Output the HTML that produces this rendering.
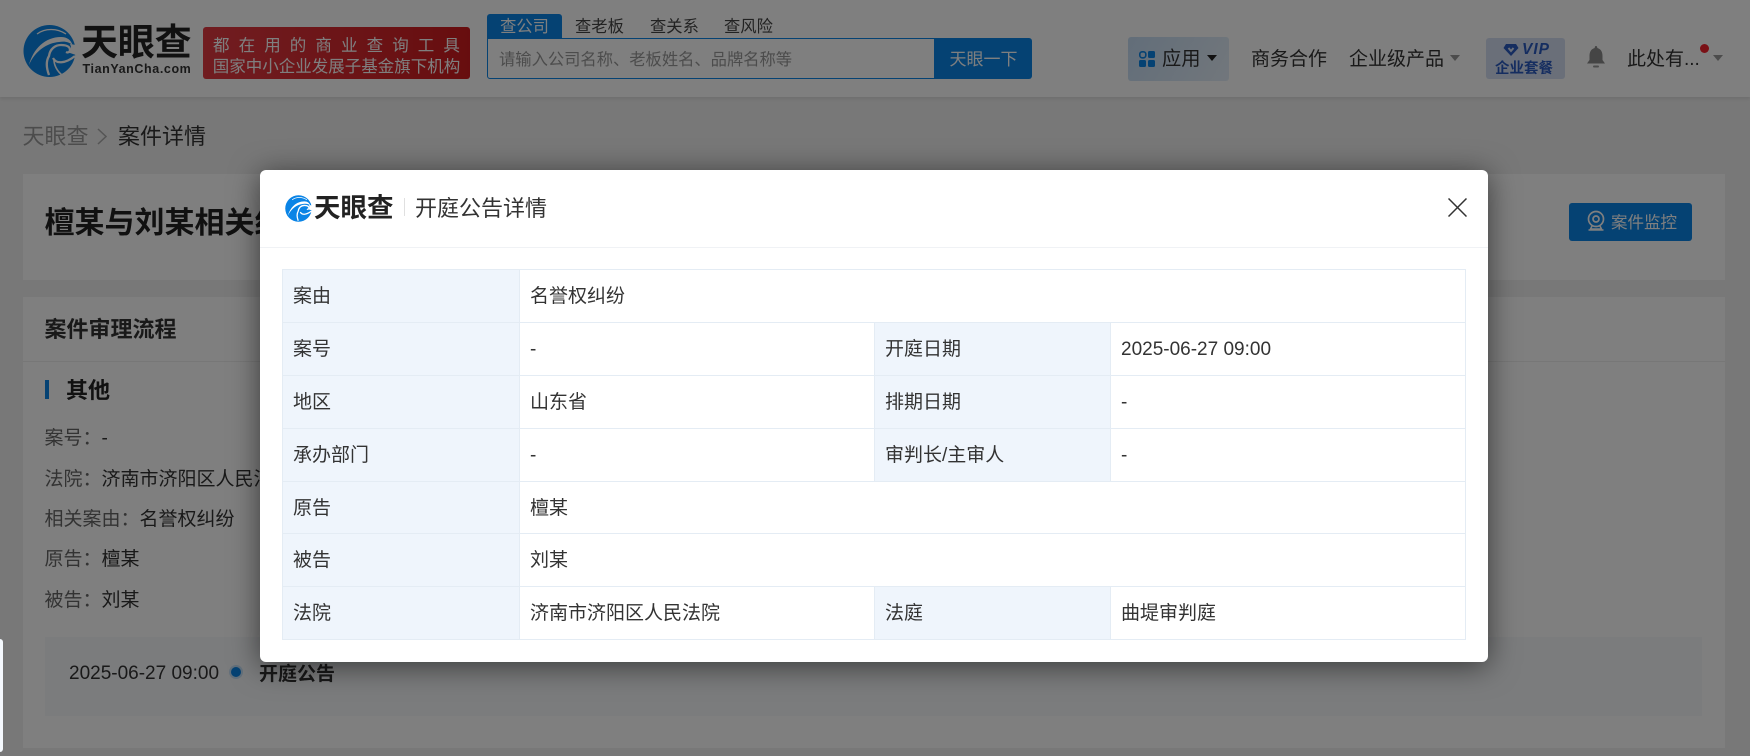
<!DOCTYPE html>
<html lang="zh"><head><meta charset="utf-8"><title>案件详情</title>
<style>
html,body{margin:0;padding:0;width:1750px;height:756px;overflow:hidden;background:#f0f0f0;font-family:"Liberation Sans","Noto Sans CJK SC",sans-serif;color:#333}
.a{position:absolute;white-space:nowrap}
.t{position:absolute;white-space:nowrap;line-height:30px;height:30px;margin-top:2px}
#header{position:absolute;left:0;top:0;width:1750px;height:97px;background:#fff;box-shadow:0 1px 4px rgba(0,0,0,.12)}
.card{position:absolute;left:22px;width:1702px;background:#fff;border:1px solid #f0f0f0}
.lab{color:#666}
.lab b{font-weight:400;color:#333}
#ov{position:absolute;left:0;top:0;width:1750px;height:756px;background:rgba(0,0,0,.5)}
#modal{position:absolute;left:260px;top:170px;width:1228px;height:492px;background:#fff;border-radius:6px;box-shadow:0 4px 30px rgba(0,0,0,.55)}
.cell{position:absolute;box-sizing:border-box;border:1px solid #e4ecf4;font-size:19px;color:#333;line-height:54px;padding-left:10px;white-space:nowrap;margin:0 -1px -1px 0}
.l{background:#eff5fc}
</style></head><body>
<div id="header">
<svg class="a" style="left:23px;top:25px" width="53" height="52" viewBox="0 0 53 52"><circle cx="26.500" cy="26" r="26" fill="#0a84e6"/><path d="M14 9C22 3 34 3 43 9" fill="none" stroke="#fff" stroke-width="1.300"/><path d="M6 40C10 24 22 12 38 12C44 12 48 15 49.500 20C46 17 42 16 36 17C24 18 12 26 6 40Z" fill="#fff"/><path d="M53 20L47 19C49 23 48 26 44 27L53 30Z" fill="#fff"/><path d="M26 50C23 42 23 36 26 31C27 24 32 20 38 20C44 20 47 22 47 25C47 27 45 28 43 27" fill="none" stroke="#fff" stroke-width="2.300"/><path d="M30 33C33 39 42 39 52 31" fill="none" stroke="#fff" stroke-width="2.200"/><path d="M39 50C34 46 31 40 31 35" fill="none" stroke="#fff" stroke-width="1.600"/></svg>
<div class="a" style="left:81px;top:21px;font-size:37px;line-height:44px;font-weight:700;color:#222;letter-spacing:-.2px">天眼查</div>
<div class="a" style="left:82.500px;top:62px;font-size:12.500px;line-height:14px;font-weight:700;color:#333;letter-spacing:.6px">TianYanCha.com</div>
<div class="a" style="left:203px;top:27px;width:267px;height:52px;border-radius:3px;background:linear-gradient(90deg,#e23a42,#cf1b1e);color:#fff;text-align:center;font-size:16.500px">
<div style="position:absolute;left:0;top:7px;width:267px;line-height:24px;letter-spacing:9.100px;text-indent:9px">都在用的商业查询工具</div>
<div style="position:absolute;left:0;top:29px;width:267px;line-height:22px">国家中小企业发展子基金旗下机构</div></div>
<div class="a" style="left:487px;top:14px;width:75px;height:24px;background:#0a84e6;border-radius:3px 3px 0 0;color:#fff;font-size:16.300px;line-height:26px;text-align:center">查公司</div>
<div class="a" style="left:575px;top:14px;font-size:16.300px;line-height:26px;color:#444">查老板</div>
<div class="a" style="left:650px;top:14px;font-size:16.300px;line-height:26px;color:#444">查关系</div>
<div class="a" style="left:724px;top:14px;font-size:16.300px;line-height:26px;color:#444">查风险</div>
<div class="a" style="left:487px;top:38px;width:448px;height:41px;box-sizing:border-box;border:1px solid #0a84e6;border-radius:0 0 0 3px;font-size:16.300px;line-height:42px;color:#999;padding-left:11px">请输入公司名称、老板姓名、品牌名称等</div>
<div class="a" style="left:935px;top:38px;width:97px;height:41px;background:#0a84e6;border-radius:0 3px 3px 0;color:#fff;font-size:17px;line-height:44px;text-align:center">天眼一下</div>
<div class="a" style="left:1128px;top:37px;width:101px;height:44px;border-radius:3px;background:linear-gradient(120deg,#c5dcf3,#e4eef8)"></div>
<svg class="a" style="left:1139px;top:51px" width="16" height="16" viewBox="0 0 16 16"><rect x="0.800" y="0.800" width="6" height="6" rx="2.400" fill="none" stroke="#0a84e6" stroke-width="1.600"/><rect x="9" y="0" width="7" height="7" rx="1.500" fill="#0a84e6"/><rect x="0" y="9" width="7" height="7" rx="1.500" fill="#0a84e6"/><rect x="9" y="9" width="7" height="7" rx="1.500" fill="#0a84e6"/></svg>
<div class="a" style="left:1162px;top:45px;font-size:19.300px;line-height:30px;color:#333">应用</div>
<div class="a" style="left:1207px;top:55px;border-style:solid;border-width:6px 5px 0;border-color:#222 transparent transparent"></div>
<div class="a" style="left:1251px;top:45px;font-size:19px;line-height:30px;color:#333">商务合作</div>
<div class="a" style="left:1349px;top:45px;font-size:19px;line-height:30px;color:#333">企业级产品</div>
<div class="a" style="left:1450px;top:55px;border-style:solid;border-width:6px 5px 0;border-color:#999 transparent transparent"></div>
<div class="a" style="left:1486px;top:38px;width:79px;height:41px;border-radius:3px;background:#d4dff2"></div>
<svg class="a" style="left:1503px;top:43px" width="16" height="14" viewBox="0 0 16 14"><path d="M3 1H13L15.500 5L8 13L.5 5Z" fill="#2a5bc0"/><path d="M5.500 5L8 8L10.500 5" fill="none" stroke="#d4dff2" stroke-width="2"/></svg>
<div class="a" style="left:1522px;top:42px;font-size:15.500px;line-height:16px;font-weight:700;font-style:italic;color:#2a5bc0;letter-spacing:1px">VIP</div>
<div class="a" style="left:1495px;top:59px;font-size:14.500px;line-height:20px;font-weight:700;color:#2a5bc0">企业套餐</div>
<svg class="a" style="left:1587px;top:46px" width="18" height="22" viewBox="0 0 18 22"><path d="M9 0C10 0 10.300 1 10.300 2C14 3 15.500 6 15.500 10V14L18 17.500H0L2.500 14V10C2.500 6 4 3 7.700 2C7.700 1 8 0 9 0Z" fill="#8a8a8a"/><rect x="6" y="19.500" width="6" height="2" rx="1" fill="#999"/></svg>
<div class="a" style="left:1627px;top:45px;font-size:19px;line-height:30px;color:#333">此处有...</div>
<div class="a" style="left:1700px;top:44px;width:9px;height:9px;border-radius:50%;background:#f5222d"></div>
<div class="a" style="left:1713px;top:55px;border-style:solid;border-width:6px 5px 0;border-color:#999 transparent transparent"></div>
</div>

<div class="t" style="left:22.500px;top:120px;font-size:22px;color:#999">天眼查</div>
<svg class="a" style="left:96px;top:128px" width="12" height="17" viewBox="0 0 12 17"><path d="M2 1L10 8.500L2 16" fill="none" stroke="#aaa" stroke-width="1.500"/></svg>
<div class="t" style="left:118px;top:120px;font-size:22px;color:#333">案件详情</div>

<div class="card" style="top:173px;height:106px"></div>
<div class="t" style="left:44.500px;top:207px;font-size:30px;font-weight:700;color:#222">檀某与刘某相关纠纷</div>
<div class="a" style="left:1569px;top:203px;width:123px;height:38px;border-radius:3px;background:#0a84e6"></div>
<svg class="a" style="left:1587px;top:210px" width="18" height="22" viewBox="0 0 18 22"><circle cx="9" cy="9" r="7.500" fill="none" stroke="#fff" stroke-width="1.700"/><circle cx="9" cy="9" r="3" fill="none" stroke="#fff" stroke-width="1.700"/><path d="M5 16L3.500 19H14.500L13 16M1.500 20H16.500" fill="none" stroke="#fff" stroke-width="1.500"/></svg>
<div class="t" style="left:1611px;top:206px;font-size:16.500px;color:#fff">案件监控</div>

<div class="card" style="top:296px;height:451px"></div>
<div class="a" style="left:23px;top:361px;width:1702px;height:1px;background:#eee"></div>
<div class="t" style="left:44.500px;top:313px;font-size:22px;font-weight:700;color:#333">案件审理流程</div>
<div class="a" style="left:45px;top:380px;width:4px;height:19px;background:#0a84e6"></div>
<div class="t" style="left:66px;top:374px;font-size:22px;font-weight:700;color:#222">其他</div>
<div class="t lab" style="left:44.500px;top:422px;font-size:19px">案号：<b>-</b></div>
<div class="t lab" style="left:44.500px;top:463px;font-size:19px">法院：<b>济南市济阳区人民法院</b></div>
<div class="t lab" style="left:44.500px;top:503px;font-size:19px">相关案由：<b>名誉权纠纷</b></div>
<div class="t lab" style="left:44.500px;top:543px;font-size:19px">原告：<b>檀某</b></div>
<div class="t lab" style="left:44.500px;top:584px;font-size:19px">被告：<b>刘某</b></div>
<div class="a" style="left:45px;top:637px;width:1657px;height:79px;background:#f6f8fb"></div>
<div class="t" style="left:69px;top:657px;font-size:19px;color:#333">2025-06-27 09:00</div>
<div class="a" style="left:231px;top:667px;width:10px;height:10px;border-radius:50%;background:#0a84e6;box-shadow:0 0 0 2px rgba(10,132,230,.2)"></div>
<div class="t" style="left:259px;top:658px;font-size:19px;font-weight:700;color:#333">开庭公告</div>

<div id="ov"></div>
<div class="a" style="left:0;top:639px;width:3px;height:113px;background:#f4f8fd;border-radius:0 5px 5px 0"></div>

<div id="modal">
<svg class="a" style="left:25px;top:25px" width="27" height="27" viewBox="0 0 53 52"><circle cx="26.500" cy="26" r="26" fill="#0a84e6"/><path d="M14 9C22 3 34 3 43 9" fill="none" stroke="#fff" stroke-width="1.500"/><path d="M6 40C10 24 22 12 38 12C44 12 48 15 49.500 20C46 17 42 16 36 17C24 18 12 26 6 40Z" fill="#fff"/><path d="M53 20L47 19C49 23 48 26 44 27L53 30Z" fill="#fff"/><path d="M26 50C23 42 23 36 26 31C27 24 32 20 38 20C44 20 47 22 47 25C47 27 45 28 43 27" fill="none" stroke="#fff" stroke-width="2.500"/><path d="M30 33C33 39 42 39 52 31" fill="none" stroke="#fff" stroke-width="2.500"/></svg>
<div class="a" style="left:54px;top:22px;font-size:26.500px;line-height:32px;font-weight:700;color:#222">天眼查</div>
<div class="a" style="left:144px;top:28px;width:1px;height:18px;background:#e0e0e0"></div>
<div class="a" style="left:155px;top:23px;font-size:22px;line-height:32px;color:#333">开庭公告详情</div>
<svg class="a" style="left:1188px;top:28px" width="19" height="19" viewBox="0 0 19 19"><path d="M.5 .5L18.500 18.500M18.500 .5L.5 18.500" fill="none" stroke="#333" stroke-width="1.500"/></svg>
<div class="a" style="left:0;top:77px;width:1228px;height:1px;background:#f0f2f5"></div>
</div>
<div class="cell l" style="left:282px;top:269px;width:238px;height:54px">案由</div>
<div class="cell" style="left:519px;top:269px;width:947px;height:54px">名誉权纠纷</div>
<div class="cell l" style="left:282px;top:322px;width:238px;height:54px">案号</div>
<div class="cell" style="left:519px;top:322px;width:356px;height:54px">-</div>
<div class="cell l" style="left:874px;top:322px;width:237px;height:54px">开庭日期</div>
<div class="cell" style="left:1110px;top:322px;width:356px;height:54px">2025-06-27 09:00</div>
<div class="cell l" style="left:282px;top:375px;width:238px;height:54px">地区</div>
<div class="cell" style="left:519px;top:375px;width:356px;height:54px">山东省</div>
<div class="cell l" style="left:874px;top:375px;width:237px;height:54px">排期日期</div>
<div class="cell" style="left:1110px;top:375px;width:356px;height:54px">-</div>
<div class="cell l" style="left:282px;top:428px;width:238px;height:54px">承办部门</div>
<div class="cell" style="left:519px;top:428px;width:356px;height:54px">-</div>
<div class="cell l" style="left:874px;top:428px;width:237px;height:54px">审判长/主审人</div>
<div class="cell" style="left:1110px;top:428px;width:356px;height:54px">-</div>
<div class="cell l" style="left:282px;top:481px;width:238px;height:53px">原告</div>
<div class="cell" style="left:519px;top:481px;width:947px;height:53px">檀某</div>
<div class="cell l" style="left:282px;top:533px;width:238px;height:54px">被告</div>
<div class="cell" style="left:519px;top:533px;width:947px;height:54px">刘某</div>
<div class="cell l" style="left:282px;top:586px;width:238px;height:54px">法院</div>
<div class="cell" style="left:519px;top:586px;width:356px;height:54px">济南市济阳区人民法院</div>
<div class="cell l" style="left:874px;top:586px;width:237px;height:54px">法庭</div>
<div class="cell" style="left:1110px;top:586px;width:356px;height:54px">曲堤审判庭</div>
</body></html>
